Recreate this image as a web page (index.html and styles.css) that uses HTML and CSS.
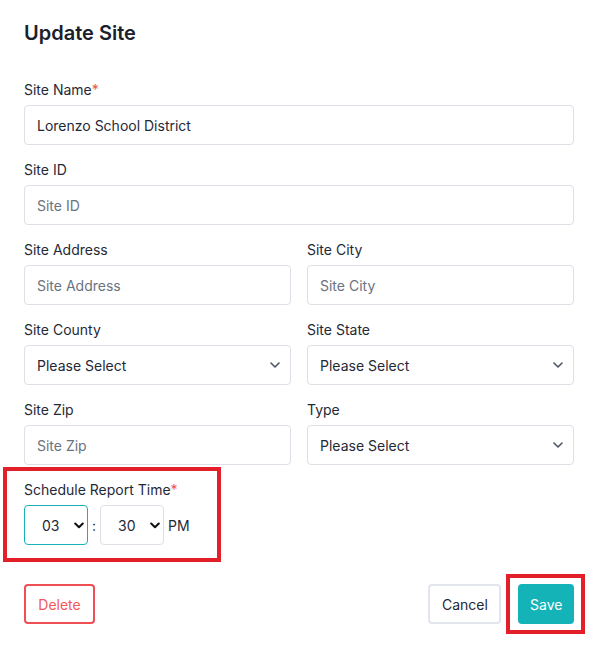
FILE: index.html
```
<!DOCTYPE html>
<html lang="en">
<head>
<meta charset="utf-8">
<title>Update Site</title>
<link rel="stylesheet" href="styles.css">
</head>
<body>
<div class="modal">
  <h1 class="title">Update Site</h1>
  <form class="form">
    <div class="field">
      <label class="label">Site Name<span class="req">*</span></label>
      <input class="input" type="text" value="Lorenzo School District">
    </div>
    <div class="field">
      <label class="label">Site ID</label>
      <input class="input" type="text" placeholder="Site ID">
    </div>
    <div class="row">
      <div class="field">
        <label class="label">Site Address</label>
        <input class="input" type="text" placeholder="Site Address">
      </div>
      <div class="field">
        <label class="label">Site City</label>
        <input class="input" type="text" placeholder="Site City">
      </div>
    </div>
    <div class="row">
      <div class="field">
        <label class="label">Site County</label>
        <div class="select-wrap">
          <select class="input select"><option>Please Select</option></select>
          <svg class="chev" width="10" height="6" viewBox="0 0 10 6"><path d="M1 1l4 4 4-4" fill="none" stroke="#4b5563" stroke-width="1.6" stroke-linecap="round" stroke-linejoin="round"/></svg>
        </div>
      </div>
      <div class="field">
        <label class="label">Site State</label>
        <div class="select-wrap">
          <select class="input select"><option>Please Select</option></select>
          <svg class="chev" width="10" height="6" viewBox="0 0 10 6"><path d="M1 1l4 4 4-4" fill="none" stroke="#4b5563" stroke-width="1.6" stroke-linecap="round" stroke-linejoin="round"/></svg>
        </div>
      </div>
    </div>
    <div class="row">
      <div class="field">
        <label class="label">Site Zip</label>
        <input class="input" type="text" placeholder="Site Zip">
      </div>
      <div class="field">
        <label class="label">Type</label>
        <div class="select-wrap">
          <select class="input select"><option>Please Select</option></select>
          <svg class="chev" width="10" height="6" viewBox="0 0 10 6"><path d="M1 1l4 4 4-4" fill="none" stroke="#4b5563" stroke-width="1.6" stroke-linecap="round" stroke-linejoin="round"/></svg>
        </div>
      </div>
    </div>
    <div class="field schedule">
      <label class="label">Schedule Report Time<span class="req">*</span></label>
      <div class="time">
        <div class="time-wrap">
          <select class="time-select active"><option>03</option></select>
          <svg class="tchev" width="10" height="7" viewBox="0 0 10 7"><path d="M1.2 1.5l3.8 3.8 3.8-3.8" fill="none" stroke="#111" stroke-width="2" stroke-linecap="round" stroke-linejoin="round"/></svg>
        </div>
        <span class="colon">:</span>
        <div class="time-wrap">
          <select class="time-select"><option>30</option></select>
          <svg class="tchev" width="10" height="7" viewBox="0 0 10 7"><path d="M1.2 1.5l3.8 3.8 3.8-3.8" fill="none" stroke="#111" stroke-width="2" stroke-linecap="round" stroke-linejoin="round"/></svg>
        </div>
        <span class="ampm">PM</span>
      </div>
    </div>
    <div class="actions">
      <button type="button" class="btn btn-delete">Delete</button>
      <div class="actions-right">
        <button type="button" class="btn btn-cancel">Cancel</button>
        <button type="button" class="btn btn-save">Save</button>
      </div>
    </div>
  </form>
</div>
</body>
</html>
```
FILE: styles.css
```
*, *::before, *::after { box-sizing: border-box; }
html, body { margin: 0; padding: 0; background: #fff; }
body {
  font-family: Inter, "Noto Sans", "Liberation Sans", sans-serif;
  color: #1f2937;
  width: 594px;
  height: 645px;
  overflow: hidden;
}
.modal { padding: 21px 20px 0 24px; }
.title {
  margin: 0;
  font-size: 20px;
  line-height: 24px;
  font-weight: 600;
  color: #1a202c;
}
.form {
  margin-top: 35px;
  display: flex;
  flex-direction: column;
  gap: 15px;
  width: 550px;
}
.row {
  display: grid;
  grid-template-columns: 1fr 1fr;
  gap: 16px;
}
.field { display: flex; flex-direction: column; gap: 5px; }
.label { font-size: 14px; line-height: 20px; color: #1f2937; }
.req { color: #f05252; }
.input {
  height: 40px;
  width: 100%;
  border: 1px solid #dde0e6;
  border-radius: 4px;
  padding: 0 12px;
  font-family: inherit;
  font-size: 14px;
  color: #1f2937;
  background: #fff;
  outline: none;
}
.input::placeholder { color: #6b7280; }
.select-wrap { position: relative; }
.select { appearance: none; -webkit-appearance: none; }
.chev { position: absolute; right: 11px; top: 17px; pointer-events: none; }
.schedule { position: relative; }
.schedule::before {
  content: "";
  position: absolute;
  left: -21px;
  top: -13px;
  width: 218px;
  height: 95px;
  border: 4px solid #e3202a;
  pointer-events: none;
}
.time { display: flex; align-items: center; gap: 0; }
.time-wrap { position: relative; }
.time-select {
  appearance: none;
  -webkit-appearance: none;
  width: 64px;
  height: 40px;
  border: 1px solid #dde0e6;
  border-radius: 4px;
  background: #fff;
  font-family: inherit;
  font-size: 14px;
  color: #1f2937;
  padding: 0 0 0 17px;
  outline: none;
}
.time-select.active { border-color: #17b2b8; }
.tchev { position: absolute; left: 50px; top: 17px; pointer-events: none; }
.colon { font-size: 14px; width: 12px; text-align: center; color: #1f2937; }
.ampm { font-size: 14px; margin-left: 4px; color: #1f2937; }
.actions {
  margin-top: 24px;
  display: flex;
  justify-content: space-between;
  align-items: center;
}
.actions-right { display: flex; gap: 17px; position: relative; }
.btn {
  height: 40px;
  border-radius: 4px;
  font-family: inherit;
  font-size: 14px;
  padding: 0 12px;
  background: #fff;
  cursor: pointer;
}
.btn-delete { border: 2px solid #ef4e55; color: #f0585e; width: 71px; }
.btn-cancel { border: 2px solid #e2e5eb; color: #1f2937; width: 73px; }
.btn-save {
  border: none;
  background: #13b3b8;
  color: #fff;
  width: 56px;
  position: relative;
}
.btn-save::before {
  content: "";
  position: absolute;
  left: -12px;
  top: -10px;
  width: 79px;
  height: 60px;
  border: 4px solid #e3202a;
  pointer-events: none;
}
```
